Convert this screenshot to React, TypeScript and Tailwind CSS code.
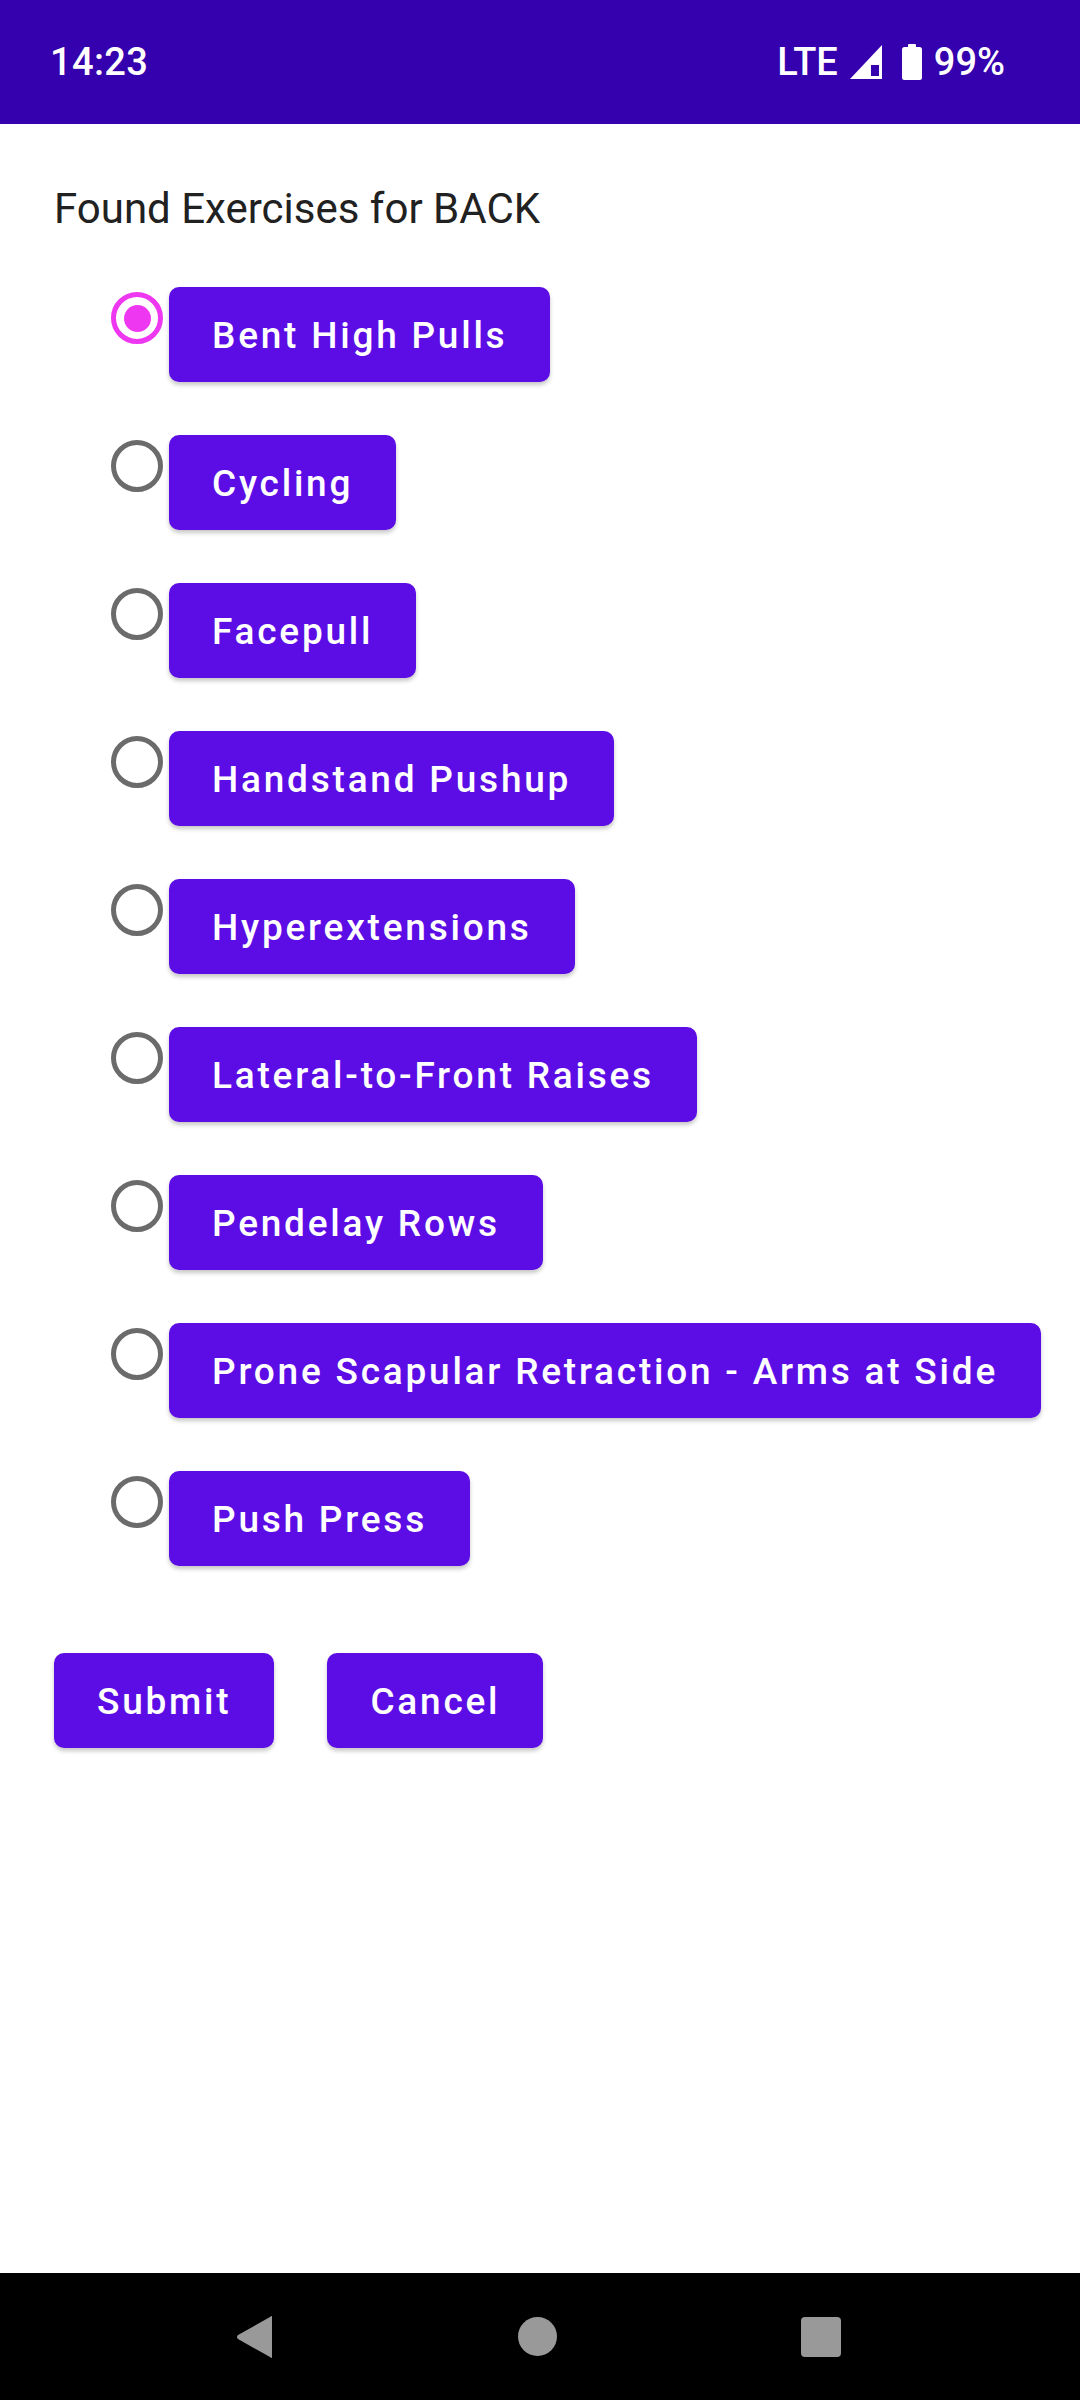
import { useState } from 'react'

const exercises = [
  'Bent High Pulls',
  'Cycling',
  'Facepull',
  'Handstand Pushup',
  'Hyperextensions',
  'Lateral-to-Front Raises',
  'Pendelay Rows',
  'Prone Scapular Retraction - Arms at Side',
  'Push Press',
]

function StatusBar() {
  return (
    <div className="h-[124px] bg-[#3500AD] flex items-center justify-between pl-[50px] pr-[75px] text-white text-[38px] font-medium">
      <span className="tracking-[0.01em]">14:23</span>
      <div className="flex items-center">
        <span>LTE</span>
        {/* signal */}
        <svg width="32" height="34" viewBox="0 0 32 34" className="ml-[12px]">
          <polygon points="0,34 32,0 32,34" fill="#fff" />
          <rect x="21" y="20" width="8" height="11" fill="#3500AD" />
        </svg>
        {/* battery */}
        <svg width="20" height="36" viewBox="0 0 20 36" className="ml-[20px]">
          <rect x="6" y="0" width="8" height="4" rx="1" fill="#fff" />
          <rect x="0" y="3" width="20" height="33" rx="2.5" fill="#fff" />
        </svg>
        <span className="ml-[12px]">99%</span>
      </div>
    </div>
  )
}

function Radio({ checked }: { checked: boolean }) {
  return (
    <div
      className={`w-[52px] h-[52px] rounded-full border-[5px] flex items-center justify-center mt-[5px] shrink-0 ${
        checked ? 'border-[#EE37F0]' : 'border-[#6b6b6b]'
      }`}
    >
      {checked && <div className="w-[27px] h-[27px] rounded-full bg-[#EE37F0]" />}
    </div>
  )
}

function PurpleButton({ label, onClick }: { label: string; onClick?: () => void }) {
  return (
    <button
      onClick={onClick}
      className="h-[95px] px-[43px] pt-[3px] rounded-[10px] bg-[#5C0DE6] text-white text-[37px] font-medium tracking-[0.075em] flex items-center shadow-[0_3px_4px_rgba(0,0,0,0.22)] whitespace-nowrap"
    >
      {label}
    </button>
  )
}

export default function App() {
  const [selected, setSelected] = useState(0)

  return (
    <div className="w-[1080px] h-[2400px] bg-white flex flex-col" style={{ fontFamily: 'Roboto, "Liberation Sans", sans-serif' }}>
      <StatusBar />

      <div className="flex-1 pt-[60px] px-[54px]">
        <h1 className="text-[42px] leading-[50px] text-[#212121] font-normal">Found Exercises for BACK</h1>

        {/* Exercise list */}
        <div className="mt-[53px] flex flex-col gap-[53px] pl-[57px]">
          {exercises.map((name, i) => (
            <div key={name} className="flex items-start gap-[6px]">
              <div onClick={() => setSelected(i)}>
                <Radio checked={selected === i} />
              </div>
              <PurpleButton label={name} onClick={() => setSelected(i)} />
            </div>
          ))}
        </div>

        {/* Actions */}
        <div className="mt-[87px] flex items-center gap-[53px]">
          <PurpleButton label="Submit" />
          <PurpleButton label="Cancel" />
        </div>
      </div>

      {/* Nav bar */}
      <div className="h-[127px] bg-black flex items-center">
        <div className="w-full flex items-center justify-between pl-[236px] pr-[239px]">
          <svg width="38" height="42" viewBox="0 0 38 42">
            <path d="M36 1 L36 41 Q36 43 34 41 L2 23 Q0 21 2 19 L34 1 Q36 -1 36 1 Z" fill="#999" />
          </svg>
          <div className="w-[39px] h-[39px] rounded-full bg-[#999]" />
          <div className="w-[40px] h-[40px] rounded-[4px] bg-[#999]" />
        </div>
      </div>
    </div>
  )
}
